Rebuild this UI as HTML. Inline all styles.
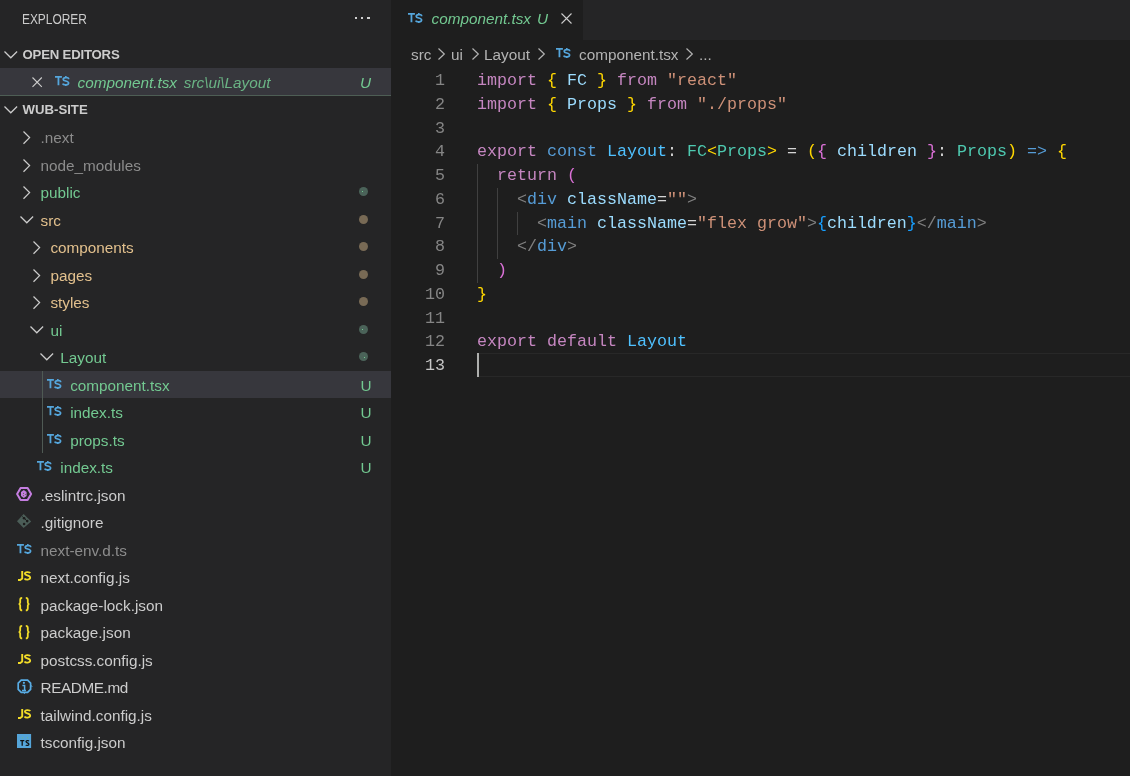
<!DOCTYPE html>
<html><head><meta charset="utf-8"><style>
*{margin:0;padding:0;box-sizing:border-box}
html,body{width:1130px;height:776px;overflow:hidden;background:#1e1e1e}
body{position:relative;font-family:"Liberation Sans",sans-serif}
#side{position:absolute;left:0;top:0;width:391px;height:776px;background:#252526}
.t{position:absolute;white-space:pre;font-size:15.3px;line-height:27.5px;height:27.5px;color:#cccccc}
.row{position:absolute;left:0;width:391px;height:27.5px}
.sel{background:#37373d}
.ic{position:absolute;overflow:visible}
.dot{position:absolute;left:359px;width:9px;height:9px;border-radius:50%}
.g{color:#73c991}.y{color:#e2c08d}.gr{color:#8c8c8c}
#tabbar{position:absolute;left:391px;top:0;width:739px;height:40px;background:#252526}
#tab{position:absolute;left:391px;top:0;width:192px;height:40px;background:#1e1e1e}
.code{position:absolute;left:477px;font-family:"Liberation Mono",monospace;font-size:16.67px;line-height:23.75px;height:23.75px;white-space:pre;color:#d4d4d4}
.ln{position:absolute;left:395px;width:50px;text-align:right;font-family:"Liberation Mono",monospace;font-size:16.67px;line-height:23.75px;color:#858585}
.k{color:#c586c0}.v{color:#9cdcfe}.s{color:#ce9178}.st{color:#569cd6}.c{color:#4fc1ff}.ty{color:#4ec9b0}
.b1{color:#ffd700}.b2{color:#da70d6}.b3{color:#179fff}.tg{color:#808080}
</style></head><body>
<div id="root" style="position:absolute;left:0;top:0;width:1130px;height:776px;will-change:transform">
<div id="side">
<div class="t" style="left:22.2px;top:5.8px;font-size:14.4px;letter-spacing:-0.05px;transform:scaleX(0.83);transform-origin:0 0">EXPLORER</div>
<div style="position:absolute;left:354.8px;top:16.6px;width:2.5px;height:2.5px;background:#d0d0d0"></div>
<div style="position:absolute;left:360.9px;top:16.6px;width:2.5px;height:2.5px;background:#d0d0d0"></div>
<div style="position:absolute;left:367.0px;top:16.6px;width:2.5px;height:2.5px;background:#d0d0d0"></div>
<svg class="ic" style="left:2.9px;top:50px" width="15" height="10" viewBox="0 0 15 10"><path d="M1.5 1.5 L7.8 7.8 L14.1 1.5" fill="none" stroke="#cccccc" stroke-width="1.25"/></svg>
<div class="t" style="left:22.5px;top:40.5px;font-size:13.2px;font-weight:bold;letter-spacing:-0.2px">OPEN EDITORS</div>
<div class="row sel" style="top:68px"></div>
<div style="position:absolute;left:0;top:95px;width:391px;height:1px;background:#4e5e55"></div>
<svg class="ic" style="left:31.7px;top:77.2px" width="11" height="11" viewBox="0 0 11 11"><path d="M0.5 0.5 L9.8 9.8 M9.8 0.5 L0.5 9.8" stroke="#cccccc" stroke-width="1.1"/></svg>
<svg class="ic" style="left:54.9px;top:76px" width="15" height="11" viewBox="0 0 15 11"><path d="M0 0.9 H6.9 M3.45 0.9 V9.2" stroke="#55a6dc" stroke-width="1.8" fill="none"/><path d="M13.6 3.2 V2.6 C13.6 1.2 8.2 1.0 8.2 3.4 C8.2 5.4 13.6 4.6 13.6 7.0 C13.6 9.4 8.4 9.4 7.6 7.6" stroke="#55a6dc" stroke-width="1.7" fill="none"/><path d="M10.8 0 V1.6 M10.8 8.6 V10.1" stroke="#55a6dc" stroke-width="1.5" fill="none"/></svg>
<div class="t g" style="left:77.5px;top:69px;font-style:italic">component.tsx <span style="opacity:.85;margin-left:2.5px">src\ui\Layout</span></div>
<div class="t g" style="left:360px;top:69px;font-style:italic">U</div>
<svg class="ic" style="left:2.9px;top:105px" width="15" height="10" viewBox="0 0 15 10"><path d="M1.5 1.5 L7.8 7.8 L14.1 1.5" fill="none" stroke="#cccccc" stroke-width="1.25"/></svg>
<div class="t" style="left:22.5px;top:95.5px;font-size:13.2px;font-weight:bold;letter-spacing:0px">WUB-SITE</div>
<svg class="ic" style="left:21.8px;top:130.0px" width="10" height="15" viewBox="0 0 10 15"><path d="M1.5 1.5 L7.6 7.6 L1.5 13.7" fill="none" stroke="#cccccc" stroke-width="1.25"/></svg>
<div class="t gr" style="left:40.5px;top:124.0px;">.next</div>
<svg class="ic" style="left:21.8px;top:157.5px" width="10" height="15" viewBox="0 0 10 15"><path d="M1.5 1.5 L7.6 7.6 L1.5 13.7" fill="none" stroke="#cccccc" stroke-width="1.25"/></svg>
<div class="t gr" style="left:40.5px;top:151.5px;">node_modules</div>
<svg class="ic" style="left:21.8px;top:185.0px" width="10" height="15" viewBox="0 0 10 15"><path d="M1.5 1.5 L7.6 7.6 L1.5 13.7" fill="none" stroke="#cccccc" stroke-width="1.25"/></svg>
<div class="t g" style="left:40.5px;top:179.0px;">public</div>
<div class="dot" style="top:187.25px;background:#4b6359"></div>
<div style="position:absolute;left:362px;top:191.25px;width:1.2px;height:1.2px;background:#73c991"></div>
<svg class="ic" style="left:18.8px;top:214.8px" width="15" height="10" viewBox="0 0 15 10"><path d="M1.5 1.5 L7.8 7.8 L14.1 1.5" fill="none" stroke="#cccccc" stroke-width="1.25"/></svg>
<div class="t y" style="left:40.5px;top:206.5px;">src</div>
<div class="dot" style="top:214.75px;background:#786a55"></div>
<svg class="ic" style="left:31.700000000000003px;top:240.0px" width="10" height="15" viewBox="0 0 10 15"><path d="M1.5 1.5 L7.6 7.6 L1.5 13.7" fill="none" stroke="#cccccc" stroke-width="1.25"/></svg>
<div class="t y" style="left:50.4px;top:234.0px;">components</div>
<div class="dot" style="top:242.25px;background:#786a55"></div>
<svg class="ic" style="left:31.700000000000003px;top:267.5px" width="10" height="15" viewBox="0 0 10 15"><path d="M1.5 1.5 L7.6 7.6 L1.5 13.7" fill="none" stroke="#cccccc" stroke-width="1.25"/></svg>
<div class="t y" style="left:50.4px;top:261.5px;">pages</div>
<div class="dot" style="top:269.75px;background:#786a55"></div>
<svg class="ic" style="left:31.700000000000003px;top:295.0px" width="10" height="15" viewBox="0 0 10 15"><path d="M1.5 1.5 L7.6 7.6 L1.5 13.7" fill="none" stroke="#cccccc" stroke-width="1.25"/></svg>
<div class="t y" style="left:50.4px;top:289.0px;">styles</div>
<div class="dot" style="top:297.25px;background:#786a55"></div>
<svg class="ic" style="left:28.7px;top:324.8px" width="15" height="10" viewBox="0 0 15 10"><path d="M1.5 1.5 L7.8 7.8 L14.1 1.5" fill="none" stroke="#cccccc" stroke-width="1.25"/></svg>
<div class="t g" style="left:50.4px;top:316.5px;">ui</div>
<div class="dot" style="top:324.75px;background:#4b6359"></div>
<div style="position:absolute;left:362px;top:328.75px;width:1.2px;height:1.2px;background:#73c991"></div>
<svg class="ic" style="left:38.599999999999994px;top:352.3px" width="15" height="10" viewBox="0 0 15 10"><path d="M1.5 1.5 L7.8 7.8 L14.1 1.5" fill="none" stroke="#cccccc" stroke-width="1.25"/></svg>
<div class="t g" style="left:60.3px;top:344.0px;">Layout</div>
<div class="dot" style="top:352.25px;background:#4b6359"></div>
<div style="position:absolute;left:364px;top:357.25px;width:1.2px;height:1.2px;background:#73c991"></div>
<div class="row sel" style="top:370.5px"></div>
<svg class="ic" style="left:46.7px;top:378.9px" width="15" height="11" viewBox="0 0 15 11"><path d="M0 0.9 H6.9 M3.45 0.9 V9.2" stroke="#55a6dc" stroke-width="1.8" fill="none"/><path d="M13.6 3.2 V2.6 C13.6 1.2 8.2 1.0 8.2 3.4 C8.2 5.4 13.6 4.6 13.6 7.0 C13.6 9.4 8.4 9.4 7.6 7.6" stroke="#55a6dc" stroke-width="1.7" fill="none"/><path d="M10.8 0 V1.6 M10.8 8.6 V10.1" stroke="#55a6dc" stroke-width="1.5" fill="none"/></svg>
<div class="t g" style="left:70.2px;top:371.5px;">component.tsx</div>
<div class="t g" style="left:360.5px;top:371.5px">U</div>
<svg class="ic" style="left:46.7px;top:406.4px" width="15" height="11" viewBox="0 0 15 11"><path d="M0 0.9 H6.9 M3.45 0.9 V9.2" stroke="#55a6dc" stroke-width="1.8" fill="none"/><path d="M13.6 3.2 V2.6 C13.6 1.2 8.2 1.0 8.2 3.4 C8.2 5.4 13.6 4.6 13.6 7.0 C13.6 9.4 8.4 9.4 7.6 7.6" stroke="#55a6dc" stroke-width="1.7" fill="none"/><path d="M10.8 0 V1.6 M10.8 8.6 V10.1" stroke="#55a6dc" stroke-width="1.5" fill="none"/></svg>
<div class="t g" style="left:70.2px;top:399.0px;">index.ts</div>
<div class="t g" style="left:360.5px;top:399.0px">U</div>
<svg class="ic" style="left:46.7px;top:433.9px" width="15" height="11" viewBox="0 0 15 11"><path d="M0 0.9 H6.9 M3.45 0.9 V9.2" stroke="#55a6dc" stroke-width="1.8" fill="none"/><path d="M13.6 3.2 V2.6 C13.6 1.2 8.2 1.0 8.2 3.4 C8.2 5.4 13.6 4.6 13.6 7.0 C13.6 9.4 8.4 9.4 7.6 7.6" stroke="#55a6dc" stroke-width="1.7" fill="none"/><path d="M10.8 0 V1.6 M10.8 8.6 V10.1" stroke="#55a6dc" stroke-width="1.5" fill="none"/></svg>
<div class="t g" style="left:70.2px;top:426.5px;">props.ts</div>
<div class="t g" style="left:360.5px;top:426.5px">U</div>
<svg class="ic" style="left:36.8px;top:461.4px" width="15" height="11" viewBox="0 0 15 11"><path d="M0 0.9 H6.9 M3.45 0.9 V9.2" stroke="#55a6dc" stroke-width="1.8" fill="none"/><path d="M13.6 3.2 V2.6 C13.6 1.2 8.2 1.0 8.2 3.4 C8.2 5.4 13.6 4.6 13.6 7.0 C13.6 9.4 8.4 9.4 7.6 7.6" stroke="#55a6dc" stroke-width="1.7" fill="none"/><path d="M10.8 0 V1.6 M10.8 8.6 V10.1" stroke="#55a6dc" stroke-width="1.5" fill="none"/></svg>
<div class="t g" style="left:60.3px;top:454.0px;">index.ts</div>
<div class="t g" style="left:360.5px;top:454.0px">U</div>
<svg class="ic" style="left:16px;top:486.9px" width="17" height="15" viewBox="0 0 17 15"><path d="M1.1 7.1 L4.6 1 H11.6 L15.1 7.1 L11.6 13.1 H4.6 Z" stroke="#c57ee0" stroke-width="2" fill="none" stroke-linejoin="round"/><path d="M5 5.1 L7.8 3.1 L10.6 5.1 V9.1 L7.8 11.1 L5 9.1 Z" fill="#c57ee0"/><circle cx="7.5" cy="6.4" r="0.6" fill="#6a6a5a"/><circle cx="9.5" cy="7.5" r="0.6" fill="#6a6a5a"/><circle cx="7.5" cy="8.6" r="0.6" fill="#6a6a5a"/></svg>
<div class="t " style="left:40.5px;top:481.5px;">.eslintrc.json</div>
<svg class="ic" style="left:16.8px;top:513.8px" width="15" height="15" viewBox="0 0 15 15"><path d="M6.6 0 L14.2 7.6 L6.6 14.1 L0 7.2 Z" fill="#4b5d57"/><circle cx="7.1" cy="4.2" r="1.3" fill="#1b1b1b"/><circle cx="10.2" cy="7.1" r="1.3" fill="#1b1b1b"/><circle cx="7.1" cy="10" r="1.3" fill="#1b1b1b"/><path d="M5.2 2.4 L10.2 7.1" stroke="#1b1b1b" stroke-width="0.9"/></svg>
<div class="t " style="left:40.5px;top:509.0px;">.gitignore</div>
<svg class="ic" style="left:17.0px;top:543.9px" width="15" height="11" viewBox="0 0 15 11"><path d="M0 0.9 H6.9 M3.45 0.9 V9.2" stroke="#55a6dc" stroke-width="1.8" fill="none"/><path d="M13.6 3.2 V2.6 C13.6 1.2 8.2 1.0 8.2 3.4 C8.2 5.4 13.6 4.6 13.6 7.0 C13.6 9.4 8.4 9.4 7.6 7.6" stroke="#55a6dc" stroke-width="1.7" fill="none"/><path d="M10.8 0 V1.6 M10.8 8.6 V10.1" stroke="#55a6dc" stroke-width="1.5" fill="none"/></svg>
<div class="t gr" style="left:40.5px;top:536.5px;">next-env.d.ts</div>
<svg class="ic" style="left:17.8px;top:571.1px" width="13" height="10" viewBox="0 0 13 10"><path d="M4.2 0 V7.6 L2.2 9 H0" stroke="#f2dc28" stroke-width="1.9" fill="none"/><path d="M12.2 2.2 C11.6 0.7 6.9 0.6 6.9 2.7 C6.9 4.6 12.2 4.2 12.2 6.6 C12.2 9 7.5 9.2 6.5 7.5" stroke="#f2dc28" stroke-width="1.8" fill="none"/></svg>
<div class="t " style="left:40.5px;top:564.0px;">next.config.js</div>
<svg class="ic" style="left:18.1px;top:597.0px" width="13" height="15" viewBox="0 0 13 15"><path d="M4.2 0.8 C2.6 0.8 2.2 1.6 2.2 3 V5.6 C2.2 6.6 1.6 7.1 0.6 7.1 C1.6 7.1 2.2 7.6 2.2 8.6 V11.2 C2.2 12.6 2.6 13.4 4.2 13.4" stroke="#f2dc28" stroke-width="1.8" fill="none"/><path d="M7.8 0.8 C9.4 0.8 9.8 1.6 9.8 3 V5.6 C9.8 6.6 10.4 7.1 11.4 7.1 C10.4 7.1 9.8 7.6 9.8 8.6 V11.2 C9.8 12.6 9.4 13.4 7.8 13.4" stroke="#f2dc28" stroke-width="1.8" fill="none"/></svg>
<div class="t " style="left:40.5px;top:591.5px;">package-lock.json</div>
<svg class="ic" style="left:18.1px;top:624.5px" width="13" height="15" viewBox="0 0 13 15"><path d="M4.2 0.8 C2.6 0.8 2.2 1.6 2.2 3 V5.6 C2.2 6.6 1.6 7.1 0.6 7.1 C1.6 7.1 2.2 7.6 2.2 8.6 V11.2 C2.2 12.6 2.6 13.4 4.2 13.4" stroke="#f2dc28" stroke-width="1.8" fill="none"/><path d="M7.8 0.8 C9.4 0.8 9.8 1.6 9.8 3 V5.6 C9.8 6.6 10.4 7.1 11.4 7.1 C10.4 7.1 9.8 7.6 9.8 8.6 V11.2 C9.8 12.6 9.4 13.4 7.8 13.4" stroke="#f2dc28" stroke-width="1.8" fill="none"/></svg>
<div class="t " style="left:40.5px;top:619.0px;">package.json</div>
<svg class="ic" style="left:17.8px;top:653.6px" width="13" height="10" viewBox="0 0 13 10"><path d="M4.2 0 V7.6 L2.2 9 H0" stroke="#f2dc28" stroke-width="1.9" fill="none"/><path d="M12.2 2.2 C11.6 0.7 6.9 0.6 6.9 2.7 C6.9 4.6 12.2 4.2 12.2 6.6 C12.2 9 7.5 9.2 6.5 7.5" stroke="#f2dc28" stroke-width="1.8" fill="none"/></svg>
<div class="t " style="left:40.5px;top:646.5px;">postcss.config.js</div>
<svg class="ic" style="left:16.9px;top:678.9px" width="16" height="16" viewBox="0 0 16 16"><path d="M4.2 1.2 H10.6 L13.6 4.2 V10.4 L10.6 13.4 H4.2 L1.2 10.4 V4.2 Z" stroke="#58ace4" stroke-width="1.7" fill="none"/><path d="M14.3 6.4 L15 7.3 L14.3 8.2 M6.6 13.6 L7.4 14.6 L8.2 13.6" stroke="#58ace4" stroke-width="1" fill="none"/><circle cx="6.9" cy="3.8" r="1.1" fill="#58ace4"/><path d="M5.4 6.6 H7.6 V11.4 M5 11.6 H9" stroke="#58ace4" stroke-width="1.5" fill="none"/></svg>
<div class="t " style="left:40.5px;top:674.0px;letter-spacing:-0.4px;">README.md</div>
<svg class="ic" style="left:17.8px;top:708.6px" width="13" height="10" viewBox="0 0 13 10"><path d="M4.2 0 V7.6 L2.2 9 H0" stroke="#f2dc28" stroke-width="1.9" fill="none"/><path d="M12.2 2.2 C11.6 0.7 6.9 0.6 6.9 2.7 C6.9 4.6 12.2 4.2 12.2 6.6 C12.2 9 7.5 9.2 6.5 7.5" stroke="#f2dc28" stroke-width="1.8" fill="none"/></svg>
<div class="t " style="left:40.5px;top:701.5px;">tailwind.config.js</div>
<svg class="ic" style="left:16.9px;top:733.9px" width="15" height="15" viewBox="0 0 15 15"><rect x="0" y="0" width="14.1" height="14" fill="#55a5d9"/><path d="M3.2 6.6 H7.3 M5.2 6.6 V11.8" stroke="#111" stroke-width="1.3" fill="none"/><path d="M11.9 7.2 C11.6 6.4 9 6.4 9 7.6 C9 9 11.9 8.6 11.9 10.2 C11.9 11.8 9.2 11.6 8.8 11" stroke="#111" stroke-width="1.3" fill="none"/><circle cx="5.6" cy="3.8" r="0.5" fill="#7fc060"/><circle cx="10.6" cy="3.8" r="0.5" fill="#7fc060"/></svg>
<div class="t " style="left:40.5px;top:729.0px;">tsconfig.json</div>
<div style="position:absolute;left:42px;top:370.5px;width:1px;height:82.5px;background:#4f5a54"></div>
</div>
<div id="tabbar"></div>
<div id="tab"></div>
<svg class="ic" style="left:408px;top:13px" width="15" height="11" viewBox="0 0 15 11"><path d="M0 0.9 H6.9 M3.45 0.9 V9.2" stroke="#55a6dc" stroke-width="1.8" fill="none"/><path d="M13.6 3.2 V2.6 C13.6 1.2 8.2 1.0 8.2 3.4 C8.2 5.4 13.6 4.6 13.6 7.0 C13.6 9.4 8.4 9.4 7.6 7.6" stroke="#55a6dc" stroke-width="1.7" fill="none"/><path d="M10.8 0 V1.6 M10.8 8.6 V10.1" stroke="#55a6dc" stroke-width="1.5" fill="none"/></svg>
<div class="t g" style="left:431.5px;top:4.3px;font-style:italic;line-height:30px">component.tsx<span style="margin-left:6px">U</span></div>
<svg class="ic" style="left:561px;top:12.6px" width="11" height="11" viewBox="0 0 11 11"><path d="M0.5 0.5 L10.5 10.5 M10.5 0.5 L0.5 10.5" stroke="#cccccc" stroke-width="1.1"/></svg>
<div class="t" style="left:411px;top:41px;color:#b3b3b3">src</div>
<svg class="ic" style="left:436.5px;top:47.2px" width="10" height="14" viewBox="0 0 10 14"><path d="M1.5 1.5 L7.3 7.0 L1.5 12.5" fill="none" stroke="#b3b3b3" stroke-width="1.2"/></svg>
<div class="t" style="left:451px;top:41px;color:#b3b3b3">ui</div>
<svg class="ic" style="left:470.9px;top:47.2px" width="10" height="14" viewBox="0 0 10 14"><path d="M1.5 1.5 L7.3 7.0 L1.5 12.5" fill="none" stroke="#b3b3b3" stroke-width="1.2"/></svg>
<div class="t" style="left:484px;top:41px;color:#b3b3b3">Layout</div>
<svg class="ic" style="left:536.5px;top:47.2px" width="10" height="14" viewBox="0 0 10 14"><path d="M1.5 1.5 L7.3 7.0 L1.5 12.5" fill="none" stroke="#b3b3b3" stroke-width="1.2"/></svg>
<svg class="ic" style="left:556px;top:48px" width="15" height="11" viewBox="0 0 15 11"><path d="M0 0.9 H6.9 M3.45 0.9 V9.2" stroke="#55a6dc" stroke-width="1.8" fill="none"/><path d="M13.6 3.2 V2.6 C13.6 1.2 8.2 1.0 8.2 3.4 C8.2 5.4 13.6 4.6 13.6 7.0 C13.6 9.4 8.4 9.4 7.6 7.6" stroke="#55a6dc" stroke-width="1.7" fill="none"/><path d="M10.8 0 V1.6 M10.8 8.6 V10.1" stroke="#55a6dc" stroke-width="1.5" fill="none"/></svg>
<div class="t" style="left:579px;top:41px;color:#b3b3b3">component.tsx</div>
<svg class="ic" style="left:685px;top:47.2px" width="10" height="14" viewBox="0 0 10 14"><path d="M1.5 1.5 L7.3 7.0 L1.5 12.5" fill="none" stroke="#b3b3b3" stroke-width="1.2"/></svg>
<div class="t" style="left:699px;top:41px;color:#b3b3b3">...</div>
<div class="ln" style="top:69.0px;color:#858585">1</div>
<div class="code" style="top:69.0px"><span class="k">import</span> <span class="b1">{</span> <span class="v">FC</span> <span class="b1">}</span> <span class="k">from</span> <span class="s">"react"</span></div>
<div class="ln" style="top:92.75px;color:#858585">2</div>
<div class="code" style="top:92.75px"><span class="k">import</span> <span class="b1">{</span> <span class="v">Props</span> <span class="b1">}</span> <span class="k">from</span> <span class="s">"./props"</span></div>
<div class="ln" style="top:116.5px;color:#858585">3</div>
<div class="code" style="top:116.5px"></div>
<div class="ln" style="top:140.25px;color:#858585">4</div>
<div class="code" style="top:140.25px"><span class="k">export</span> <span class="st">const</span> <span class="c">Layout</span>: <span class="ty">FC</span><span class="b1">&lt;</span><span class="ty">Props</span><span class="b1">&gt;</span> = <span class="b1">(</span><span class="b2">{</span> <span class="v">children</span> <span class="b2">}</span>: <span class="ty">Props</span><span class="b1">)</span> <span class="st">=&gt;</span> <span class="b1">{</span></div>
<div class="ln" style="top:164.0px;color:#858585">5</div>
<div class="code" style="top:164.0px">  <span class="k">return</span> <span class="b2">(</span></div>
<div class="ln" style="top:187.75px;color:#858585">6</div>
<div class="code" style="top:187.75px">    <span class="tg">&lt;</span><span class="st">div</span> <span class="v">className</span>=<span class="s">""</span><span class="tg">&gt;</span></div>
<div class="ln" style="top:211.5px;color:#858585">7</div>
<div class="code" style="top:211.5px">      <span class="tg">&lt;</span><span class="st">main</span> <span class="v">className</span>=<span class="s">"flex grow"</span><span class="tg">&gt;</span><span class="b3">{</span><span class="v">children</span><span class="b3">}</span><span class="tg">&lt;/</span><span class="st">main</span><span class="tg">&gt;</span></div>
<div class="ln" style="top:235.25px;color:#858585">8</div>
<div class="code" style="top:235.25px">    <span class="tg">&lt;/</span><span class="st">div</span><span class="tg">&gt;</span></div>
<div class="ln" style="top:259.0px;color:#858585">9</div>
<div class="code" style="top:259.0px">  <span class="b2">)</span></div>
<div class="ln" style="top:282.75px;color:#858585">10</div>
<div class="code" style="top:282.75px"><span class="b1">}</span></div>
<div class="ln" style="top:306.5px;color:#858585">11</div>
<div class="code" style="top:306.5px"></div>
<div class="ln" style="top:330.25px;color:#858585">12</div>
<div class="code" style="top:330.25px"><span class="k">export</span> <span class="k">default</span> <span class="c">Layout</span></div>
<div class="ln" style="top:354.0px;color:#c6c6c6">13</div>
<div class="code" style="top:354.0px"></div>
<div style="position:absolute;left:477px;top:353.2px;width:660px;height:23.5px;border:1.5px solid #282828;border-right:none"></div>
<div style="position:absolute;left:477px;top:353.2px;width:2px;height:23.5px;background:#aeafad"></div>
<div style="position:absolute;left:477.0px;top:164.0px;width:1px;height:118.75px;background:#404040"></div>
<div style="position:absolute;left:497.16px;top:187.75px;width:1px;height:71.25px;background:#404040"></div>
<div style="position:absolute;left:517.32px;top:211.5px;width:1px;height:23.75px;background:#404040"></div>
</div>
</body></html>
